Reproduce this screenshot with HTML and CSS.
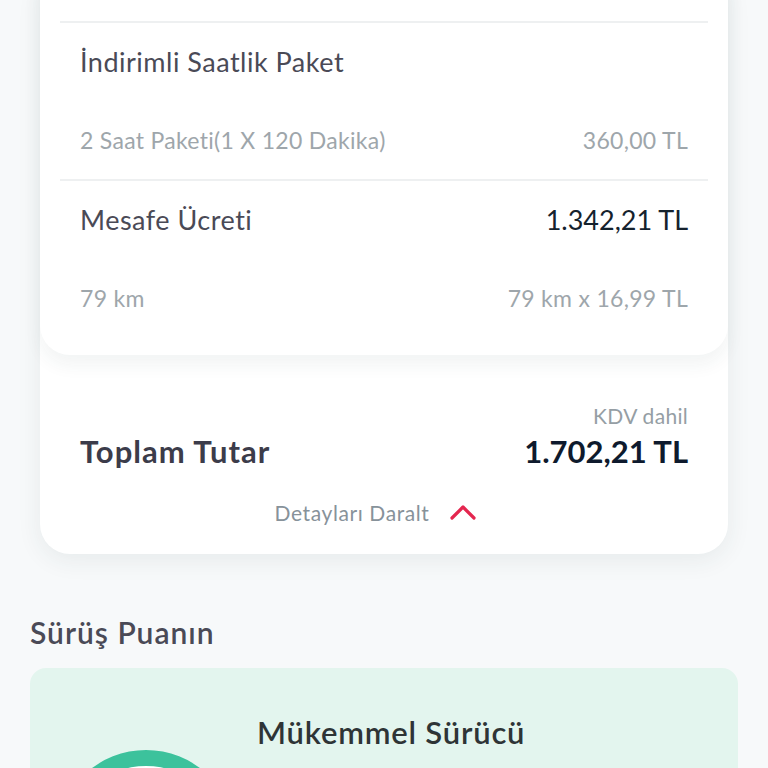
FILE: index.html
```html
<!DOCTYPE html>
<html lang="tr">

<head>
  <meta charset="UTF-8">
  <meta name="viewport" content="width=device-width, initial-scale=1.0">
  <title>Kiralama Özeti</title>
  <link rel="stylesheet" href="styles.css">
</head>

<body>
  <div class="page">
    <div class="summary">
      <div class="details">
        <div class="group">
          <div class="row row-title">
            <span class="label">İndirimli Saatlik Paket</span>
          </div>
          <div class="row row-sub">
            <span>2 Saat Paketi(1 X 120 Dakika)</span>
            <span>360,00 TL</span>
          </div>
        </div>

        <div class="group last">
          <div class="row row-title">
            <span class="label">Mesafe Ücreti</span>
            <span class="amount">1.342,21 TL</span>
          </div>
          <div class="row row-sub">
            <span>79 km</span>
            <span>79 km x 16,99 TL</span>
          </div>
        </div>
      </div>

      <div class="total">
        <div class="vat">KDV dahil</div>
        <div class="total-row">
          <span class="total-label">Toplam Tutar</span>
          <span class="total-amount">1.702,21 TL</span>
        </div>
        <div class="collapse">
          <span>Detayları Daralt</span>
          <svg class="chevron" width="28" height="16" viewBox="0 0 28 16">
            <path d="M3 14 L14 3 L25 14" fill="none" stroke="#e4264f" stroke-width="3.2" stroke-linecap="round" stroke-linejoin="round" />
          </svg>
        </div>
      </div>
    </div>

    <div class="score-section">
      <h2>Sürüş Puanın</h2>
      <div class="score-card">
        <svg class="gauge" width="180" height="180" viewBox="0 0 180 180">
          <circle cx="90" cy="90" r="82" fill="#ffffff" stroke="#3cc29c" stroke-width="16" />
        </svg>
        <div class="score-text">
          <h3>Mükemmel Sürücü</h3>
          <p>Harika bir sürüş gerçekleştirdin, tebrikler!</p>
        </div>
      </div>
    </div>
  </div>
</body>

</html>
```

FILE: styles.css
```css
body {
  margin: 0;
  background-color: #f7f9fa;
  font-family: Lato, "Noto Sans", sans-serif;
  color: #4a4a56;
}

.page {
  margin-top: -30px;
}

.summary {
  margin: 0 40px;
  background-color: #fff;
  border-radius: 30px;
  box-shadow: 0 6px 24px rgba(40, 60, 70, 0.08);
}

.details {
  padding: 51px 20px 18px;
  background-color: #fff;
  border-radius: 0 0 30px 30px;
  box-shadow: 0 10px 18px rgba(40, 60, 70, 0.06);
}

.group {
  border-top: 2px solid #eef0f1;
}

.row {
  display: flex;
  justify-content: space-between;
  align-items: center;
  padding: 0 20px;
}

.row-title {
  height: 77px;
  font-size: 27px;
  letter-spacing: 0.5px;
}

.row-sub {
  height: 79px;
  font-size: 23px;
  letter-spacing: 0.3px;
  color: #9ea6ab;
}

.amount {
  letter-spacing: 0;
  color: #15222d;
}

.total {
  padding: 49px 40px 30px;
}

.vat {
  text-align: right;
  font-size: 21px;
  letter-spacing: 0.3px;
  line-height: 24px;
  color: #959ea4;
}

.total-row {
  display: flex;
  justify-content: space-between;
  align-items: center;
  margin-top: 5px;
  height: 36px;
  font-weight: bold;
}

.total-label {
  font-size: 31px;
  letter-spacing: 1px;
  color: #3c3c4a;
}

.total-amount {
  font-size: 31px;
  color: #0e1a2d;
}

.collapse {
  display: flex;
  justify-content: center;
  align-items: center;
  gap: 20px;
  margin-top: 31px;
  padding-right: 16px;
  height: 24px;
  font-size: 21px;
  letter-spacing: 0.6px;
  color: #87929a;
}

.score-section {
  padding: 60px 30px 0;
}

.score-section h2 {
  margin: 0;
  font-size: 30px;
  letter-spacing: 1px;
  line-height: 36px;
  font-weight: 600;
  color: #4a4a56;
}

.score-card {
  display: flex;
  margin-top: 18px;
  height: 200px;
  background-color: #e3f5ee;
  border-radius: 16px;
  overflow: hidden;
}

.gauge {
  flex: none;
  margin: 82px 0 0 26px;
}

.score-text {
  padding: 46px 0 0 21px;
}

.score-text h3 {
  margin: 0;
  font-size: 31px;
  letter-spacing: 0.8px;
  line-height: 36px;
  font-weight: 600;
  color: #2e3436;
}

.score-text p {
  margin: 14px 0 0;
  font-size: 22px;
  color: #8d979c;
}
```
